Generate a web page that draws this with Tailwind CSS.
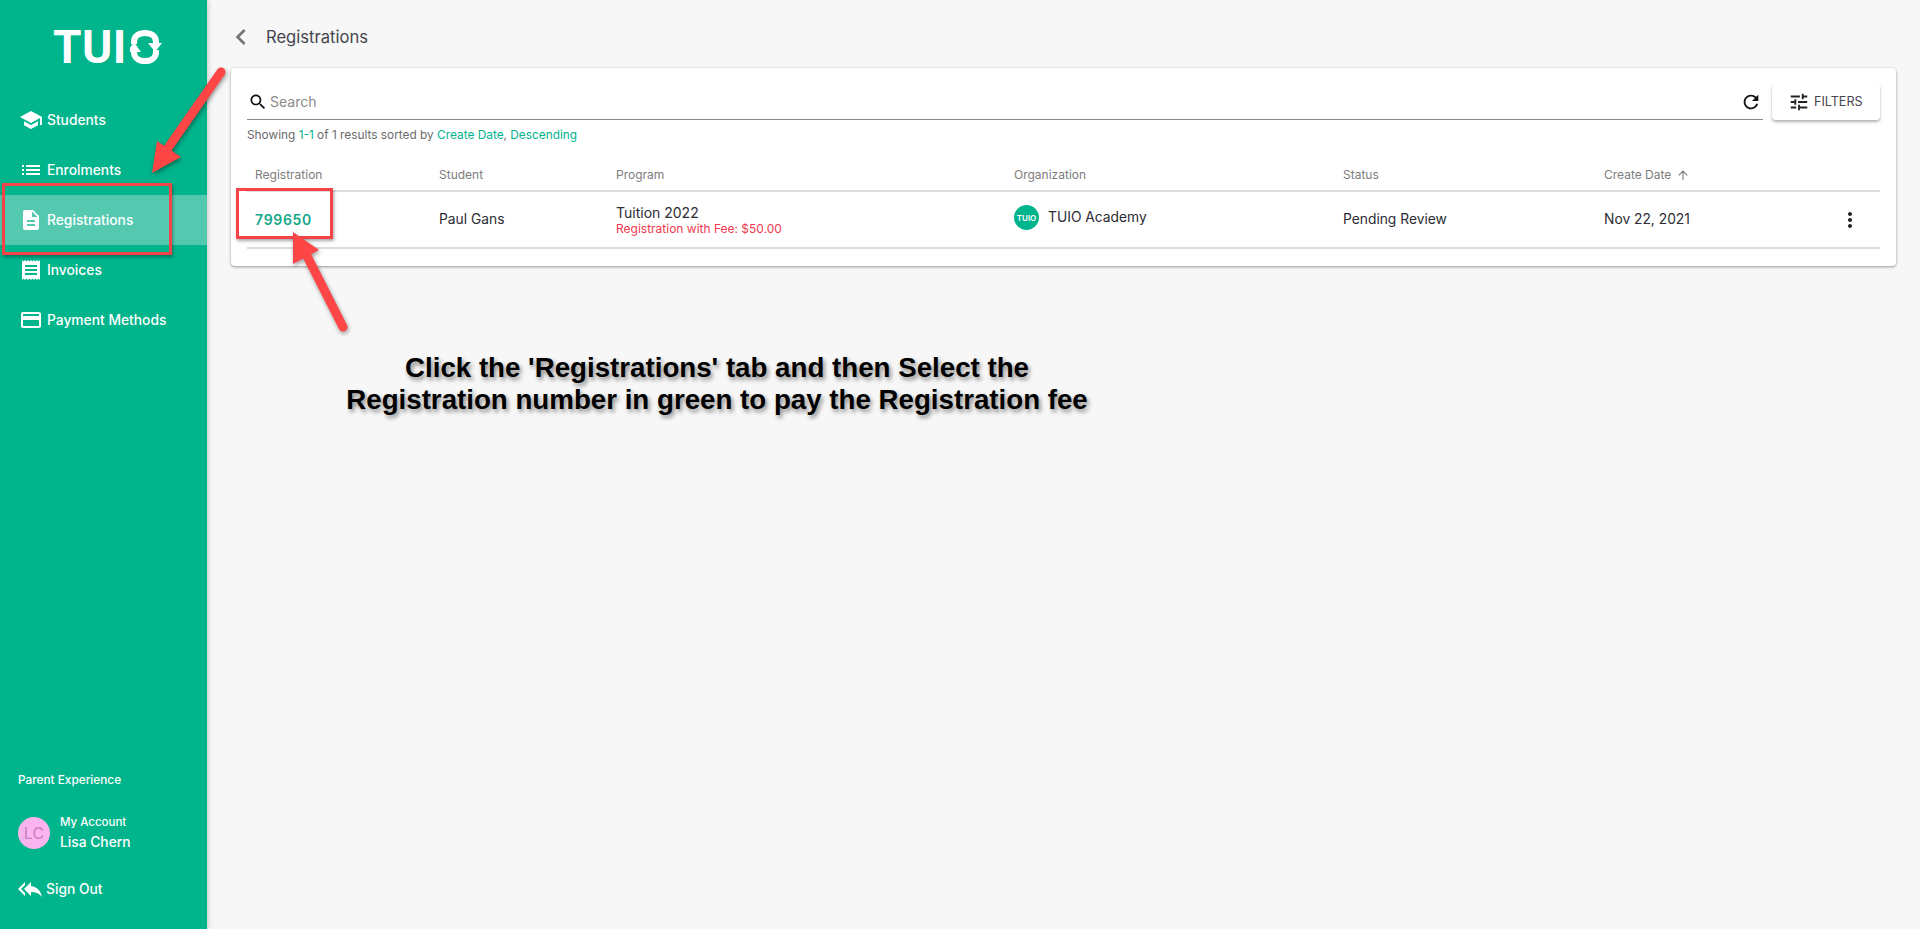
<!DOCTYPE html>
<html lang="en">
<head>
    <meta charset="UTF-8">
    <meta name="viewport" content="width=device-width, initial-scale=1.0">
    <title>Registrations</title>
    <script src="https://cdn.jsdelivr.net/npm/@tailwindcss/browser@4"></script>
</head>
<body class="relative flex h-[929px] overflow-hidden bg-[#f7f7f7] font-['Inter','Liberation_Sans',sans-serif] text-[#2c2c34]">

    <!-- Sidebar -->
    <aside class="flex h-full w-[207px] shrink-0 flex-col bg-[#00b48c] text-white shadow-[1px_0_5px_rgba(0,0,0,0.2)]">
        <div class="flex h-[95px] items-start pl-[53px] pt-[20px]">
            <span class="font-['Roboto'] text-[46px] font-bold leading-[54px] tracking-[0.5px]">TUI</span>
            <svg class="ml-[3px] mt-[9px] h-[36px] w-[32px]" viewBox="0 0 32 36" fill="none" stroke="white" stroke-width="6">
                <path d="M4 15V13C4 7 9 4 15 4S26 7 26 13v3" />
                <path d="M26 21v2c0 6-5 9-11 9S4 29 4 23v-3" />
                <path d="M18 14h14l-7 9z" fill="white" stroke="none" />
                <path d="M-3 23h14L4 13z" fill="white" stroke="none" />
            </svg>
        </div>

        <nav class="text-[13.8px] font-medium">
            <a class="flex h-[50px] items-center pl-[19px]">
                <svg class="h-6 w-6" viewBox="0 0 24 24" fill="white"><path d="M5 13.18v4L12 21l7-3.820v-4L12 17l-7-3.820zM12 3L1 9l11 6 9-4.910V17h2V9L12 3z"/></svg>
                <span class="ml-[4px]">Students</span>
            </a>
            <a class="flex h-[50px] items-center pl-[19px]">
                <svg class="h-6 w-6" viewBox="0 0 24 24" fill="white"><path d="M3 13h2v-2H3v2zm0 4h2v-2H3v2zm0-8h2V7H3v2zm4 4h14v-2H7v2zm0 4h14v-2H7v2zM7 7v2h14V7H7z"/></svg>
                <span class="ml-[4px]">Enrolments</span>
            </a>
            <a class="flex h-[50px] items-center bg-[#54c9b0] pl-[19px]">
                <svg class="h-6 w-6" viewBox="0 0 24 24" fill="white"><path d="M14 2H6c-1.100 0-1.990.9-1.990 2L4 20c0 1.100.89 2 1.990 2H18c1.100 0 2-.9 2-2V8l-6-6zm2 16H8v-2h8v2zm0-4H8v-2h8v2zm-3-5V3.500L18.500 9H13z"/></svg>
                <span class="ml-[4px]">Registrations</span>
            </a>
            <a class="flex h-[50px] items-center pl-[19px]">
                <svg class="h-6 w-6" viewBox="0 0 24 24" fill="white"><path d="M18 17H6v-2h12v2zm0-4H6v-2h12v2zm0-4H6V7h12v2zM3 22l1.500-1.500L6 22l1.500-1.500L9 22l1.500-1.500L12 22l1.500-1.500L15 22l1.500-1.500L18 22l1.500-1.500L21 22V2l-1.500 1.500L18 2l-1.500 1.500L15 2l-1.500 1.500L12 2l-1.500 1.500L9 2 7.500 3.500 6 2 4.500 3.500 3 2v20z"/></svg>
                <span class="ml-[4px]">Invoices</span>
            </a>
            <a class="flex h-[50px] items-center pl-[19px]">
                <svg class="h-6 w-6" viewBox="0 0 24 24" fill="white"><path d="M20 4H4c-1.110 0-1.990.89-1.990 2L2 18c0 1.110.89 2 2 2h16c1.110 0 2-.89 2-2V6c0-1.110-.89-2-2-2zm0 14H4v-6h16v6zm0-10H4V6h16v2z"/></svg>
                <span class="ml-[4px]">Payment Methods</span>
            </a>
        </nav>

        <div class="mt-auto px-[18px] pb-[28px]">
            <div class="text-[11.8px] font-medium leading-4">Parent Experience</div>
            <div class="mt-[25px] flex items-center">
                <div class="flex h-8 w-8 items-center justify-center rounded-full bg-[#fbb4ee] text-base text-[#c77fbd]">LC</div>
                <div class="ml-[10px]">
                    <div class="text-[11.5px] font-medium leading-[18px]">My Account</div>
                    <div class="mt-[1px] text-[13.8px] font-medium leading-[20px]">Lisa Chern</div>
                </div>
            </div>
            <div class="mt-[25px] flex h-6 items-center text-[13.8px] font-medium">
                <svg class="h-6 w-6" viewBox="0 0 24 24" fill="white"><path d="M7 8V5l-7 7 7 7v-3l-4-4 4-4zm6 1V5l-7 7 7 7v-4.100c5 0 8.500 1.600 11 5.100-1-5-4-10-11-11z"/></svg>
                <span class="ml-[4px]">Sign Out</span>
            </div>
        </div>
    </aside>

    <!-- Main -->
    <main class="min-w-0 flex-1 pl-[24px] pr-[24px]">
        <div class="flex h-[68px] items-center pt-[6px]">
            <svg class="ml-[-6px] h-8 w-8" viewBox="0 0 24 24" fill="#757575"><path d="M15.410 7.410L14 6l-6 6 6 6 1.410-1.410L10.830 12z"/></svg>
            <h1 class="ml-[9px] text-[16.6px] font-normal text-[#45454d]">Registrations</h1>
        </div>

        <section class="h-[198px] rounded-[4px] bg-white px-[16px] pt-[16px] shadow-[0_1px_3px_rgba(0,0,0,0.4)]">
            <div class="flex items-start">
                <div class="flex h-[36px] flex-1 items-center border-b border-[#8a8a8a] pt-[1px]">
                    <svg class="ml-[1px] h-[20px] w-[20px]" viewBox="0 0 24 24" fill="#111"><path d="M15.500 14h-.79l-.28-.27C15.410 12.590 16 11.110 16 9.500 16 5.910 13.090 3 9.500 3S3 5.910 3 9.500 5.910 16 9.500 16c1.610 0 3.090-.59 4.230-1.570l.27.28v.79l5 4.990L20.490 19l-4.990-5zm-6 0C7.010 14 5 11.990 5 9.500S7.010 5 9.500 5 14 7.010 14 9.500 11.990 14 9.500 14z"/></svg>
                    <span class="ml-[2px] text-sm text-[#8b8b8b]">Search</span>
                    <svg class="ml-auto mr-[1px] h-[22px] w-[22px]" viewBox="0 0 24 24" fill="#111"><path d="M17.650 6.350C16.200 4.900 14.210 4 12 4c-4.420 0-7.990 3.580-7.990 8s3.570 8 7.990 8c3.730 0 6.840-2.550 7.730-6h-2.080c-.82 2.330-3.040 4-5.650 4-3.310 0-6-2.690-6-6s2.690-6 6-6c1.660 0 3.140.69 4.220 1.780L13 11h7V4l-2.350 2.350z"/></svg>
                </div>
                <div class="ml-[9px] flex h-[36px] w-[108px] items-center rounded-[4px] bg-white pl-[16px] text-[12.6px] text-[#45454d] shadow-[0_2px_3px_rgba(0,0,0,0.3)]">
                    <svg class="h-[22px] w-[22px]" viewBox="0 0 24 24" fill="#222"><path d="M3 17v2h6v-2H3zM3 5v2h10V5H3zm10 16v-2h8v-2h-8v-2h-2v6h2zM7 9v2H3v2h4v2h2V9H7zm14 4v-2H11v2h10zm-6-4h2V7h4V5h-4V3h-2v6z"/></svg>
                    <span class="ml-[4px]">FILTERS</span>
                </div>
            </div>

            <p class="mt-[7px] text-[11.85px] leading-4 text-[#6b6b6b]">Showing <span class="text-[#00b48c]">1-1</span> of 1 results sorted by <span class="text-[#00b48c]">Create Date</span>, <span class="text-[#00b48c]">Descending</span></p>

            <table class="mt-[16px] w-full table-fixed border-b-2 border-[#dcdcdc] text-left text-[13.8px]">
                <colgroup>
                    <col class="w-[184px]"><col class="w-[177px]"><col class="w-[398px]"><col class="w-[329px]"><col class="w-[261px]"><col>
                </colgroup>
                <thead>
                    <tr class="h-[32px] border-b-2 border-[#dcdcdc] text-xs text-[#7d7d7d]">
                        <th class="pl-2 font-normal">Registration</th>
                        <th class="pl-2 font-normal">Student</th>
                        <th class="pl-2 font-normal">Program</th>
                        <th class="pl-2 font-normal">Organization</th>
                        <th class="pl-2 font-normal">Status</th>
                        <th class="pl-2 font-normal">
                            <span class="flex items-center">Create Date
                                <svg class="ml-[5px] h-[14px] w-[14px]" viewBox="0 0 24 24" fill="#7d7d7d"><path d="M4 12l1.410 1.410L11 7.830V20h2V7.830l5.580 5.590L20 12l-8-8-8 8z"/></svg>
                            </span>
                        </th>
                    </tr>
                </thead>
                <tbody>
                    <tr class="h-[57px]">
                        <td class="pl-2 text-sm font-semibold tracking-[0.7px] text-[#14a889]">799650</td>
                        <td class="pl-2">Paul Gans</td>
                        <td class="pl-2">
                            <div class="text-sm leading-[17px]">Tuition 2022</div>
                            <div class="text-xs leading-[15px] text-[#f0384f]">Registration with Fee: $50.00</div>
                        </td>
                        <td class="pl-2">
                            <div class="mt-[-4px] flex items-center">
                                <span class="flex h-[25px] w-[25px] items-center justify-center rounded-full bg-[#00b48c] text-[8px] font-semibold text-white">TUIO</span>
                                <span class="ml-[9px]">TUIO Academy</span>
                            </div>
                        </td>
                        <td class="pl-2">Pending Review</td>
                        <td class="pl-2">
                            <div class="flex items-center justify-between">
                                <span>Nov 22, 2021</span>
                                <svg class="mr-[18px] h-6 w-6" viewBox="0 0 24 24" fill="#222"><path d="M12 8c1.100 0 2-.9 2-2s-.9-2-2-2-2 .9-2 2 .9 2 2 2zm0 2c-1.100 0-2 .9-2 2s.9 2 2 2 2-.9 2-2-.9-2-2-2zm0 6c-1.100 0-2 .9-2 2s.9 2 2 2 2-.9 2-2-.9-2-2-2z"/></svg>
                            </div>
                        </td>
                    </tr>
                </tbody>
            </table>
        </section>

        <p class="ml-[96px] mt-[86px] w-[780px] text-center font-['Liberation_Sans'] text-[27.7px] font-bold leading-[32px] text-black [text-shadow:2px_3px_4px_rgba(0,0,0,0.45)]">Click the 'Registrations' tab and then Select the<br>Registration number in green to pay the Registration fee</p>
    </main>

    <!-- Annotations drawn on top of the screenshot -->
    <div class="absolute left-[2px] top-[183px] h-[72px] w-[170px] border-[3px] border-[#f4444a] shadow-[1px_2px_3px_rgba(0,0,0,0.35)]"></div>
    <div class="absolute left-[236px] top-[188px] h-[51px] w-[97px] border-[3px] border-[#f4444a] shadow-[1px_2px_3px_rgba(0,0,0,0.35)]"></div>
    <svg class="absolute left-0 top-0 h-[929px] w-[1920px] drop-shadow-[1px_2px_2px_rgba(0,0,0,0.4)]" viewBox="0 0 1920 929" fill="#ff4646">
        <path d="M221 72L168 148" stroke="#ff4646" stroke-width="9" stroke-linecap="round" fill="none"/>
        <path d="M152 173L157 141L181 157z"/>
        <path d="M343 327L305 252" stroke="#ff4646" stroke-width="9" stroke-linecap="round" fill="none"/>
        <path d="M293 232L319 250L293 264z"/>
    </svg>

</body>
</html>
